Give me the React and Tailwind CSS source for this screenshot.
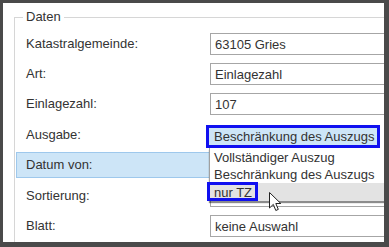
import React from "react";

const font = { fontFamily: '"Liberation Sans", Arial, sans-serif' };

function Row({ label, children, highlight, h = "h-[30px]" }) {
  if (highlight) {
    return (
      <div className="h-[31px] pt-[2px] pb-[3px] -ml-[10px]">
        <div className="h-[26px] flex items-center pl-[9px] bg-[#cde5f7] border border-[#9ec8ec]">
          <span className="w-[184px] shrink-0">{label}</span>
          {children}
        </div>
      </div>
    );
  }
  return (
    <div className={`${h} flex items-center`}>
      <span className="w-[184px] shrink-0">{label}</span>
      {children}
    </div>
  );
}

function Input({ value }) {
  return (
    <div className="h-[22px] w-[220px] shrink-0 border border-[#a6a6a6] bg-white flex items-center pl-[4px] leading-none">
      {value}
    </div>
  );
}

export default function App() {
  return (
    <div
      className="w-[389px] h-[247px] bg-white relative overflow-hidden border-l-[3px] border-t-[3px] border-r-[5px] border-b-[5px] border-[#4a4a4a] text-[13px] text-[#333]"
      style={font}
    >
      <div className="ml-[11px] mt-[14px] h-[300px] border-l border-t border-[#d6d6d6] relative">
        <span className="absolute -top-[9px] left-[8px] px-[3px] bg-white leading-[16px]">Daten</span>
        <div className="pl-[11px] pt-[11px] flex flex-col">
          <Row label="Katastralgemeinde:">
            <Input value="63105 Gries" />
          </Row>
          <Row label="Art:">
            <Input value="Einlagezahl" />
          </Row>
          <Row label="Einlagezahl:">
            <Input value="107" />
          </Row>
          <div className="h-[31px] flex">
            <span className="w-[184px] shrink-0 self-center">Ausgabe:</span>
            <div className="-ml-[4px] self-end mb-[2px] h-[23px] w-[174px] shrink-0 border-[3px] border-[#1010f0] bg-[#cde5f7] flex items-center pl-[5px] leading-none">
              Beschränkung des Auszugs
            </div>
          </div>
          <Row label="Datum von:" highlight>
            <Input value="" />
          </Row>
          <Row label="Sortierung:">
            <Input value="" />
          </Row>
          <Row label="Blatt:">
            <Input value="keine Auswahl" />
          </Row>
        </div>
      </div>

      {/* dropdown list */}
      <div className="absolute left-[206px] top-[145px] w-[200px] bg-white border-l border-[#a0a0a0] shadow-[0_2px_1px_rgba(0,0,0,0.45)] leading-none">
        <div className="h-[18px] flex items-center pl-[4px]">Vollständiger Auszug</div>
        <div className="h-[17px] flex items-center pl-[4px]">Beschränkung des Auszugs</div>
        <div className="h-[18px] flex items-center pl-[4px] bg-[#e3e3e3]">nur TZ</div>
      </div>

      {/* annotation box */}
      <div className="absolute left-[204px] top-[179px] w-[51px] h-[19px] border-[3px] border-[#1010f0]" />

      {/* cursor */}
      <svg className="absolute left-[266px] top-[189px]" width="13" height="20" viewBox="0 0 13 20">
        <path d="M0.5 0.5 L0.5 16 L4.3 12.4 L6.8 18.5 L9.3 17.4 L6.8 11.5 L11.8 11.5 Z" fill="#fff" stroke="#222" strokeWidth="1" strokeLinejoin="round" />
      </svg>
    </div>
  );
}
